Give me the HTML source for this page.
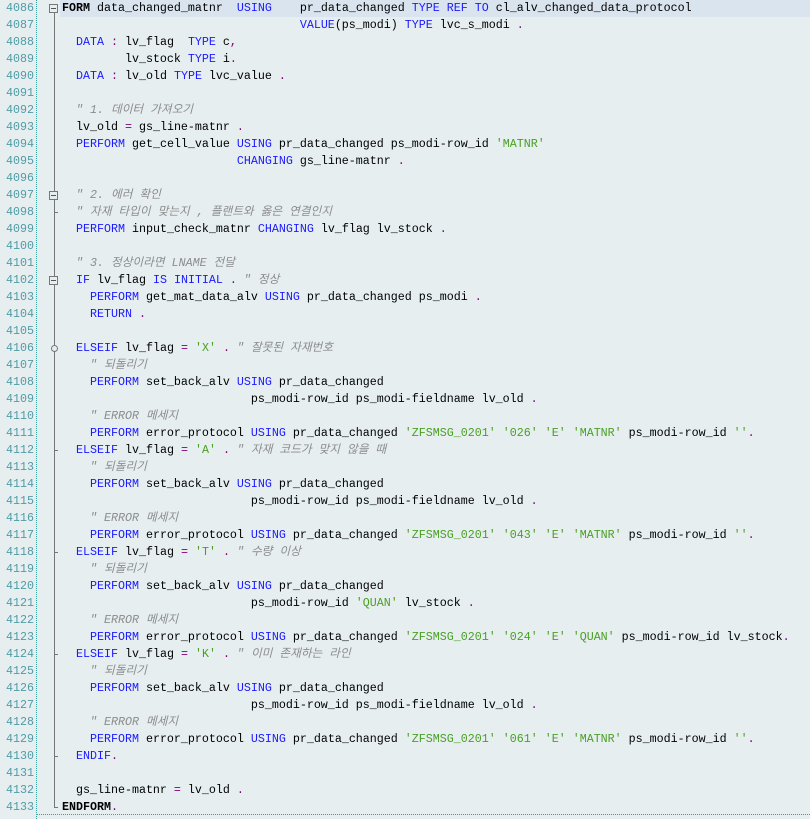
<!DOCTYPE html>
<html><head><meta charset="utf-8"><style>
body{margin:0;width:810px;height:819px;background:#e6eef0;overflow:hidden;position:relative;font-family:"Liberation Mono","Noto Sans CJK KR",monospace;font-size:11.67px;}
.hl{position:absolute;left:60px;top:0;width:750px;height:17px;background:#dae4ef;}
.num{position:absolute;left:0;width:34px;text-align:right;color:#4f9ca6;font-size:11.67px;}
.vd{position:absolute;left:36px;top:0;height:819px;border-left:1px dotted #3aa0a0;}
.hd{position:absolute;left:36px;top:814px;width:774px;border-top:1px dotted #3aa0a0;}
.fl{position:absolute;left:54px;top:13px;height:795px;border-left:1px solid #777;}
.ln{position:absolute;left:62px;white-space:pre;height:17px;line-height:17px;color:#000;}
.num{height:17px;line-height:17px;}
.k{color:#1a1aff}.s{color:#4aa024}.c{color:#8c8c8c;font-style:italic}.p{color:#800080}.b{font-weight:bold}
.box{position:absolute;left:49px;width:9px;height:9px;border:1px solid #777;background:#e6eef0;box-sizing:border-box;}
.box:after{content:"";position:absolute;left:1px;top:3px;width:5px;border-top:1px solid #555;}
.circ{position:absolute;left:51px;width:7px;height:7px;border:1px solid #777;border-radius:50%;background:#e6eef0;box-sizing:border-box;}
.tk{position:absolute;left:54px;width:4px;border-top:1px solid #777;}
</style></head><body>
<div class="hl"></div>
<div class="vd"></div><div class="hd"></div><div class="fl"></div>
<div class="num" style="top:0">4086</div><div class="num" style="top:17px">4087</div><div class="num" style="top:34px">4088</div><div class="num" style="top:51px">4089</div><div class="num" style="top:68px">4090</div><div class="num" style="top:85px">4091</div><div class="num" style="top:102px">4092</div><div class="num" style="top:119px">4093</div><div class="num" style="top:136px">4094</div><div class="num" style="top:153px">4095</div><div class="num" style="top:170px">4096</div><div class="num" style="top:187px">4097</div><div class="num" style="top:204px">4098</div><div class="num" style="top:221px">4099</div><div class="num" style="top:238px">4100</div><div class="num" style="top:255px">4101</div><div class="num" style="top:272px">4102</div><div class="num" style="top:289px">4103</div><div class="num" style="top:306px">4104</div><div class="num" style="top:323px">4105</div><div class="num" style="top:340px">4106</div><div class="num" style="top:357px">4107</div><div class="num" style="top:374px">4108</div><div class="num" style="top:391px">4109</div><div class="num" style="top:408px">4110</div><div class="num" style="top:425px">4111</div><div class="num" style="top:442px">4112</div><div class="num" style="top:459px">4113</div><div class="num" style="top:476px">4114</div><div class="num" style="top:493px">4115</div><div class="num" style="top:510px">4116</div><div class="num" style="top:527px">4117</div><div class="num" style="top:544px">4118</div><div class="num" style="top:561px">4119</div><div class="num" style="top:578px">4120</div><div class="num" style="top:595px">4121</div><div class="num" style="top:612px">4122</div><div class="num" style="top:629px">4123</div><div class="num" style="top:646px">4124</div><div class="num" style="top:663px">4125</div><div class="num" style="top:680px">4126</div><div class="num" style="top:697px">4127</div><div class="num" style="top:714px">4128</div><div class="num" style="top:731px">4129</div><div class="num" style="top:748px">4130</div><div class="num" style="top:765px">4131</div><div class="num" style="top:782px">4132</div><div class="num" style="top:799px">4133</div>

<div class="box" style="top:4px"></div>
<div class="box" style="top:191px"></div>
<div class="box" style="top:276px"></div>
<div class="circ" style="top:345px"></div>
<div class="tk" style="top:212px"></div>
<div class="tk" style="top:450px"></div>
<div class="tk" style="top:552px"></div>
<div class="tk" style="top:654px"></div>
<div class="tk" style="top:756px"></div>
<div class="tk" style="top:807px"></div>

<div class="ln" style="top:0"><span class="b">FORM</span> data_changed_matnr  <span class="k">USING</span>    pr_data_changed <span class="k">TYPE REF TO</span> cl_alv_changed_data_protocol</div>
<div class="ln" style="top:17px">                                  <span class="k">VALUE</span>(ps_modi) <span class="k">TYPE</span> lvc_s_modi <span class="p">.</span></div>
<div class="ln" style="top:34px">  <span class="k">DATA</span> <span class="p">:</span> lv_flag  <span class="k">TYPE</span> c<span class="p">,</span></div>
<div class="ln" style="top:51px">         lv_stock <span class="k">TYPE</span> i<span class="p">.</span></div>
<div class="ln" style="top:68px">  <span class="k">DATA</span> <span class="p">:</span> lv_old <span class="k">TYPE</span> lvc_value <span class="p">.</span></div>
<div class="ln" style="top:102px">  <span class="c">" 1. 데이터 가져오기</span></div>
<div class="ln" style="top:119px">  lv_old <span class="p">=</span> gs_line-matnr <span class="p">.</span></div>
<div class="ln" style="top:136px">  <span class="k">PERFORM</span> get_cell_value <span class="k">USING</span> pr_data_changed ps_modi-row_id <span class="s">'MATNR'</span></div>
<div class="ln" style="top:153px">                         <span class="k">CHANGING</span> gs_line-matnr <span class="p">.</span></div>
<div class="ln" style="top:187px">  <span class="c">" 2. 에러 확인</span></div>
<div class="ln" style="top:204px">  <span class="c">" 자재 타입이 맞는지 , 플랜트와 옳은 연결인지</span></div>
<div class="ln" style="top:221px">  <span class="k">PERFORM</span> input_check_matnr <span class="k">CHANGING</span> lv_flag lv_stock <span class="p">.</span></div>
<div class="ln" style="top:255px">  <span class="c">" 3. 정상이라면 LNAME 전달</span></div>
<div class="ln" style="top:272px">  <span class="k">IF</span> lv_flag <span class="k">IS INITIAL</span> <span class="p">.</span> <span class="c">" 정상</span></div>
<div class="ln" style="top:289px">    <span class="k">PERFORM</span> get_mat_data_alv <span class="k">USING</span> pr_data_changed ps_modi <span class="p">.</span></div>
<div class="ln" style="top:306px">    <span class="k">RETURN</span> <span class="p">.</span></div>
<div class="ln" style="top:340px">  <span class="k">ELSEIF</span> lv_flag <span class="p">=</span> <span class="s">'X'</span> <span class="p">.</span> <span class="c">" 잘못된 자재번호</span></div>
<div class="ln" style="top:357px">    <span class="c">" 되돌리기</span></div>
<div class="ln" style="top:374px">    <span class="k">PERFORM</span> set_back_alv <span class="k">USING</span> pr_data_changed</div>
<div class="ln" style="top:391px">                           ps_modi-row_id ps_modi-fieldname lv_old <span class="p">.</span></div>
<div class="ln" style="top:408px">    <span class="c">" ERROR 메세지</span></div>
<div class="ln" style="top:425px">    <span class="k">PERFORM</span> error_protocol <span class="k">USING</span> pr_data_changed <span class="s">'ZFSMSG_0201'</span> <span class="s">'026'</span> <span class="s">'E'</span> <span class="s">'MATNR'</span> ps_modi-row_id <span class="s">''</span><span class="p">.</span></div>
<div class="ln" style="top:442px">  <span class="k">ELSEIF</span> lv_flag <span class="p">=</span> <span class="s">'A'</span> <span class="p">.</span> <span class="c">" 자재 코드가 맞지 않을 때</span></div>
<div class="ln" style="top:459px">    <span class="c">" 되돌리기</span></div>
<div class="ln" style="top:476px">    <span class="k">PERFORM</span> set_back_alv <span class="k">USING</span> pr_data_changed</div>
<div class="ln" style="top:493px">                           ps_modi-row_id ps_modi-fieldname lv_old <span class="p">.</span></div>
<div class="ln" style="top:510px">    <span class="c">" ERROR 메세지</span></div>
<div class="ln" style="top:527px">    <span class="k">PERFORM</span> error_protocol <span class="k">USING</span> pr_data_changed <span class="s">'ZFSMSG_0201'</span> <span class="s">'043'</span> <span class="s">'E'</span> <span class="s">'MATNR'</span> ps_modi-row_id <span class="s">''</span><span class="p">.</span></div>
<div class="ln" style="top:544px">  <span class="k">ELSEIF</span> lv_flag <span class="p">=</span> <span class="s">'T'</span> <span class="p">.</span> <span class="c">" 수량 이상</span></div>
<div class="ln" style="top:561px">    <span class="c">" 되돌리기</span></div>
<div class="ln" style="top:578px">    <span class="k">PERFORM</span> set_back_alv <span class="k">USING</span> pr_data_changed</div>
<div class="ln" style="top:595px">                           ps_modi-row_id <span class="s">'QUAN'</span> lv_stock <span class="p">.</span></div>
<div class="ln" style="top:612px">    <span class="c">" ERROR 메세지</span></div>
<div class="ln" style="top:629px">    <span class="k">PERFORM</span> error_protocol <span class="k">USING</span> pr_data_changed <span class="s">'ZFSMSG_0201'</span> <span class="s">'024'</span> <span class="s">'E'</span> <span class="s">'QUAN'</span> ps_modi-row_id lv_stock<span class="p">.</span></div>
<div class="ln" style="top:646px">  <span class="k">ELSEIF</span> lv_flag <span class="p">=</span> <span class="s">'K'</span> <span class="p">.</span> <span class="c">" 이미 존재하는 라인</span></div>
<div class="ln" style="top:663px">    <span class="c">" 되돌리기</span></div>
<div class="ln" style="top:680px">    <span class="k">PERFORM</span> set_back_alv <span class="k">USING</span> pr_data_changed</div>
<div class="ln" style="top:697px">                           ps_modi-row_id ps_modi-fieldname lv_old <span class="p">.</span></div>
<div class="ln" style="top:714px">    <span class="c">" ERROR 메세지</span></div>
<div class="ln" style="top:731px">    <span class="k">PERFORM</span> error_protocol <span class="k">USING</span> pr_data_changed <span class="s">'ZFSMSG_0201'</span> <span class="s">'061'</span> <span class="s">'E'</span> <span class="s">'MATNR'</span> ps_modi-row_id <span class="s">''</span><span class="p">.</span></div>
<div class="ln" style="top:748px">  <span class="k">ENDIF</span><span class="p">.</span></div>
<div class="ln" style="top:782px">  gs_line-matnr <span class="p">=</span> lv_old <span class="p">.</span></div>
<div class="ln" style="top:799px"><span class="b">ENDFORM</span><span class="p">.</span></div>
</body></html>
